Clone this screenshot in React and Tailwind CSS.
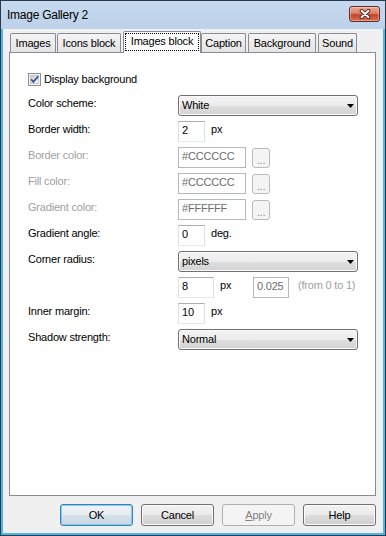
import React from "react";

function Label({ children, disabled }) {
  return (
    <div
      className={`w-[168px] shrink-0 pl-[18px] pt-[2px] leading-[13px] ${
        disabled ? "text-[#a0a0a0]" : "text-black"
      }`}
    >
      {children}
    </div>
  );
}

function Select({ value }) {
  return (
    <div className="relative h-[21px] w-[180px] rounded-[3px] border border-[#707070] bg-[linear-gradient(#f3f3f3_0%,#ececec_50%,#dfdfdf_51%,#d2d2d2_100%)] pl-[3px] pt-[3px] leading-[13px] shadow-[inset_0_0_0_1px_#fbfbfb]">
      {value}
      <svg
        className="absolute right-[3px] top-[8px]"
        width="7"
        height="4"
        viewBox="0 0 7 4"
      >
        <path d="M0 0H7L3.5 4Z" fill="#000" />
      </svg>
    </div>
  );
}

function Input({ w, value, disabled }) {
  return (
    <div
      className={`h-[21px] ${w} border bg-white pl-[3px] pt-[2px] leading-[13px] ${
        disabled
          ? "border-[#b5b8bd] text-[#6d6d6d]"
          : "border-[#abadb3] border-x-[#dbdfe6] border-b-[#e3e9ef] text-black"
      }`}
    >
      {value}
    </div>
  );
}

function DotsButton() {
  return (
    <div className="ml-[6px] mt-[1px] flex h-[20px] w-[18px] items-end justify-center rounded-[3px] border border-[#b9bcbf] bg-[#f4f4f4] pb-[3px] leading-[8px] text-[#8a8a8a]">
      ...
    </div>
  );
}

function Suffix({ children, className = "" }) {
  return (
    <div className={`ml-[6px] pt-[2px] leading-[13px] text-black ${className}`}>
      {children}
    </div>
  );
}

function Tab({ children, w, ml }) {
  return (
    <div
      className={`${w} ${ml} h-[19px] rounded-t-[2px] border border-b-0 border-[#898c95] bg-[linear-gradient(#f4f4f4,#e4e4e4)] pt-[3px] text-center leading-[13px]`}
    >
      {children}
    </div>
  );
}

function Button({ children, kind }) {
  let cls =
    "border-[#707070] bg-[linear-gradient(#f2f2f2_0%,#ebebeb_50%,#dddddd_51%,#cfcfcf_100%)] shadow-[inset_0_0_0_1px_#fcfcfc] text-black";
  if (kind === "default")
    cls =
      "border-[#3c7fb1] bg-[linear-gradient(#eef3f7_0%,#e6edf2_50%,#d6e1e9_51%,#c9d7e2_100%)] shadow-[inset_0_0_0_1px_#7fd0f5] text-black";
  if (kind === "disabled")
    cls = "border-[#adb2b5] bg-[#f4f4f4] text-[#838383]";
  return (
    <div
      className={`flex h-[22px] w-[73px] items-center justify-center rounded-[3px] border ${cls}`}
    >
      {children}
    </div>
  );
}

export default function App() {
  return (
    <div className="h-[536px] w-[386px] bg-white font-['Liberation_Sans',Arial,sans-serif] text-[11px] tracking-[-0.2px] text-black">
      <div className="flex h-full w-full flex-col border border-[#2b3a4a]">
        {/* title bar */}
        <div className="flex h-[28px] shrink-0 items-center justify-between bg-[linear-gradient(#c6d9ee,#bcd2ea)] pl-[6px] pr-[5px]">
          <div className="pb-[1px] text-[12px] tracking-[-0.25px] text-black">
            Image Gallery 2
          </div>
          <div className="mb-[2px] flex h-[16px] w-[31px] items-center justify-center rounded-[3px] border border-[#6b2a20] bg-[linear-gradient(#eaa896_0%,#d98068_45%,#c4452d_55%,#d36d52_100%)] shadow-[inset_0_0_0_1px_rgba(255,255,255,0.35)]">
            <svg width="12" height="10" viewBox="0 0 12 10">
              <path
                d="M2.5 1.8L9.5 8.2M9.5 1.8L2.5 8.2"
                stroke="#4a1a12"
                strokeWidth="3.6"
                strokeLinecap="round"
              />
              <path
                d="M2.5 1.8L9.5 8.2M9.5 1.8L2.5 8.2"
                stroke="#ffffff"
                strokeWidth="2"
                strokeLinecap="round"
              />
            </svg>
          </div>
        </div>

        {/* body */}
        <div className="flex flex-1 flex-col border-x-2 border-b-2 border-[#4fb4e6] bg-[#f0f0f0] pt-[2px]">
          {/* tabs */}
          <div className="ml-[7px] flex h-[21px] items-end">
            <Tab w="w-[46px]" ml="ml-0">Images</Tab>
            <Tab w="w-[64px]" ml="ml-[1px]">Icons block</Tab>
            <div className="relative z-10 mb-[-1px] ml-[2px] h-[22px] w-[78px] rounded-t-[2px] border border-b-0 border-[#898c95] bg-white px-[1px] pb-[2px] pt-[1px]">
              <div className="h-full w-full border border-dotted border-black pt-[1px] text-center leading-[13px]">
                Images block
              </div>
            </div>
            <Tab w="w-[45px]" ml="ml-0">Caption</Tab>
            <Tab w="w-[68px]" ml="ml-[2px]">Background</Tab>
            <Tab w="w-[39px]" ml="ml-[2px]">Sound</Tab>
          </div>

          {/* panel */}
          <div className="ml-[6px] flex h-[444px] w-[367px] flex-col gap-[5px] border border-[#898c95] bg-white pt-[16px]">
            <div className="flex h-[21px] items-center pl-[18px]">
              <svg width="13" height="13" viewBox="0 0 13 13">
                <defs>
                  <linearGradient id="cbg" x1="0" y1="0" x2="1" y2="1">
                    <stop offset="0" stopColor="#c9ced6" />
                    <stop offset="1" stopColor="#f7f7f7" />
                  </linearGradient>
                </defs>
                <rect x="0.5" y="0.5" width="12" height="12" fill="#f4f4f4" stroke="#8e8f8f" />
                <rect x="2.5" y="2.5" width="8" height="8" fill="url(#cbg)" stroke="#c3c6cb" />
                <path d="M3.2 6.3L5.4 8.9L10.2 3.2" fill="none" stroke="#3b4f92" strokeWidth="1.7" />
              </svg>
              <span className="ml-[3px]">Display background</span>
            </div>

            <div className="flex h-[21px]">
              <Label>Color scheme:</Label>
              <Select value="White" />
            </div>

            <div className="flex h-[21px]">
              <Label>Border width:</Label>
              <Input w="w-[27px]" value="2" />
              <Suffix>px</Suffix>
            </div>

            <div className="flex h-[21px]">
              <Label disabled>Border color:</Label>
              <Input w="w-[68px]" value="#CCCCCC" disabled />
              <DotsButton />
            </div>

            <div className="flex h-[21px]">
              <Label disabled>Fill color:</Label>
              <Input w="w-[68px]" value="#CCCCCC" disabled />
              <DotsButton />
            </div>

            <div className="flex h-[21px]">
              <Label disabled>Gradient color:</Label>
              <Input w="w-[68px]" value="#FFFFFF" disabled />
              <DotsButton />
            </div>

            <div className="flex h-[21px]">
              <Label>Gradient angle:</Label>
              <Input w="w-[27px]" value="0" />
              <Suffix>deg.</Suffix>
            </div>

            <div className="flex h-[21px]">
              <Label>Corner radius:</Label>
              <Select value="pixels" />
            </div>

            <div className="flex h-[21px]">
              <Label></Label>
              <Input w="w-[36px]" value="8" />
              <Suffix className="w-[33px]">px</Suffix>
              <Input w="w-[36px]" value="0.025" disabled />
              <div className="ml-[9px] pt-[2px] leading-[13px] text-[#a0a0a0]">
                (from 0 to 1)
              </div>
            </div>

            <div className="flex h-[21px]">
              <Label>Inner margin:</Label>
              <Input w="w-[27px]" value="10" />
              <Suffix>px</Suffix>
            </div>

            <div className="flex h-[21px]">
              <Label>Shadow strength:</Label>
              <Select value="Normal" />
            </div>
          </div>

          {/* buttons */}
          <div className="mt-[8px] flex justify-end gap-[8px] pr-[7px]">
            <Button kind="default">OK</Button>
            <Button>Cancel</Button>
            <Button kind="disabled">
              <span>
                <span className="underline">A</span>pply
              </span>
            </Button>
            <Button>Help</Button>
          </div>
        </div>
      </div>
    </div>
  );
}
